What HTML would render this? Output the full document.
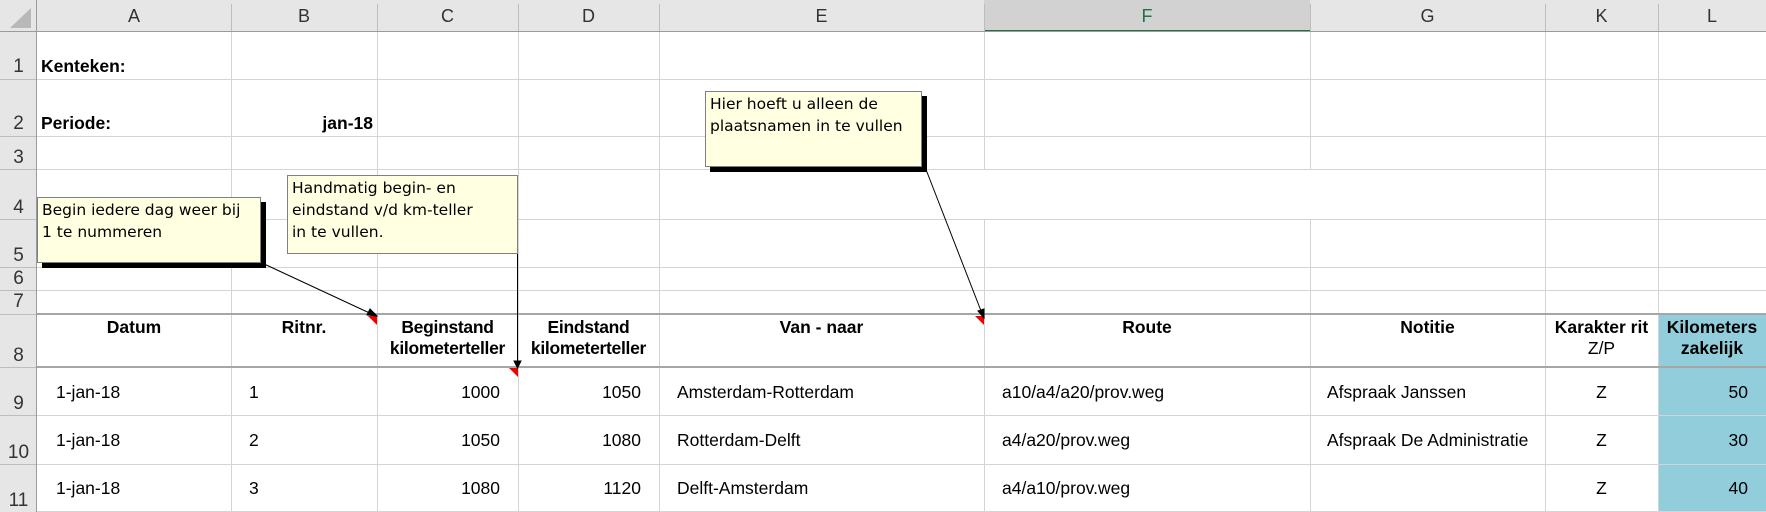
<!DOCTYPE html>
<html><head><meta charset="utf-8"><style>
*{margin:0;padding:0;box-sizing:border-box}
body{width:1766px;height:512px;overflow:hidden;background:#fff;position:relative;font-family:"Liberation Sans",Arial,sans-serif;color:#000}
.t{position:absolute;font-size:17.5px;line-height:21px;white-space:nowrap}
.b{font-weight:bold}
.ch{position:absolute;top:0;height:32px;line-height:32px;text-align:center;font-size:18px;color:#333}
.rh{position:absolute;left:0;width:37px;text-align:center;font-size:19px;color:#333;line-height:20px}
.cm{position:absolute;background:#ffffe1;border:1px solid #808080;font-family:"DejaVu Sans",sans-serif;font-size:15.5px;line-height:22px;padding:1px 4px;white-space:nowrap;overflow:visible}
.sh{box-shadow:5px 5px 0 #000}
</style></head><body>
<div style="position:absolute;left:0;top:0;width:1766px;height:32px;background:#e6e6e6"></div>
<div style="position:absolute;left:0;top:0;width:37px;height:512px;background:#e6e6e6"></div>
<div style="position:absolute;left:984px;top:0;width:326px;height:32px;background:#d2d2d2;border-bottom:2px solid #217346"></div>
<div style="position:absolute;left:1658px;top:314px;width:108px;height:198px;background:#92cddc"></div>
<svg width="1766" height="512" style="position:absolute;left:0;top:0">
<g stroke="#d4d4d4" stroke-width="1" shape-rendering="crispEdges">
<line x1="37" y1="79.5" x2="1766" y2="79.5"/>
<line x1="37" y1="136.5" x2="1766" y2="136.5"/>
<line x1="37" y1="169.5" x2="1766" y2="169.5"/>
<line x1="37" y1="219.5" x2="1766" y2="219.5"/>
<line x1="37" y1="267.5" x2="1766" y2="267.5"/>
<line x1="37" y1="290.5" x2="1766" y2="290.5"/>
<line x1="37" y1="415.5" x2="1766" y2="415.5"/>
<line x1="37" y1="464.5" x2="1766" y2="464.5"/>
<line x1="37" y1="511.5" x2="1766" y2="511.5"/>
<line x1="231.5" y1="32" x2="231.5" y2="512"/>
<line x1="377.5" y1="32" x2="377.5" y2="512"/>
<line x1="518.5" y1="32" x2="518.5" y2="512"/>
<line x1="659.5" y1="32" x2="659.5" y2="512"/>
<line x1="984.5" y1="32" x2="984.5" y2="169"/>
<line x1="984.5" y1="219" x2="984.5" y2="512"/>
<line x1="1310.5" y1="32" x2="1310.5" y2="169"/>
<line x1="1310.5" y1="219" x2="1310.5" y2="512"/>
<line x1="1545.5" y1="32" x2="1545.5" y2="512"/>
<line x1="1658.5" y1="32" x2="1658.5" y2="512"/>
</g>
<g stroke="#bdbdbd" stroke-width="1" shape-rendering="crispEdges">
<line x1="0" y1="79.5" x2="37" y2="79.5"/><line x1="0" y1="136.5" x2="37" y2="136.5"/>
<line x1="0" y1="169.5" x2="37" y2="169.5"/><line x1="0" y1="219.5" x2="37" y2="219.5"/>
<line x1="0" y1="267.5" x2="37" y2="267.5"/><line x1="0" y1="290.5" x2="37" y2="290.5"/>
<line x1="0" y1="314.5" x2="37" y2="314.5"/><line x1="0" y1="367.5" x2="37" y2="367.5"/>
<line x1="0" y1="415.5" x2="37" y2="415.5"/><line x1="0" y1="464.5" x2="37" y2="464.5"/>
<line x1="231.5" y1="4" x2="231.5" y2="32"/><line x1="377.5" y1="4" x2="377.5" y2="32"/>
<line x1="518.5" y1="4" x2="518.5" y2="32"/><line x1="659.5" y1="4" x2="659.5" y2="32"/>
<line x1="984.5" y1="4" x2="984.5" y2="32"/><line x1="1310.5" y1="4" x2="1310.5" y2="32"/>
<line x1="1545.5" y1="4" x2="1545.5" y2="32"/><line x1="1658.5" y1="4" x2="1658.5" y2="32"/>
</g>
<line x1="0" y1="31.5" x2="1766" y2="31.5" stroke="#9b9b9b" shape-rendering="crispEdges"/>
<line x1="36.5" y1="0" x2="36.5" y2="512" stroke="#9b9b9b" shape-rendering="crispEdges"/>
<line x1="37" y1="314" x2="1766" y2="314" stroke="#a6a6a6" stroke-width="2"/>
<line x1="37" y1="367" x2="1766" y2="367" stroke="#a6a6a6" stroke-width="2"/>
<polygon points="10,28 31,8 31,28" fill="#b8b8b8"/>
<polygon points="368,316 377,316 377,325" fill="#e00"/>
<polygon points="509,368 518,368 518,377" fill="#e00"/>
<polygon points="975,316 984,316 984,325" fill="#e00"/>
<g stroke="#000" stroke-width="1" fill="#000">
<line x1="262" y1="263" x2="376" y2="316"/>
<polygon points="377,316 370,309 367,315"/>
<line x1="517.5" y1="254" x2="517.5" y2="367"/>
<polygon points="517.5,368 514,361 521,361"/>
<line x1="925" y1="167" x2="983" y2="316"/>
<polygon points="984,318 978,311 984,309"/>
</g>
</svg>
<div class="ch" style="left:37px;width:194px">A</div>
<div class="ch" style="left:231px;width:146px">B</div>
<div class="ch" style="left:377px;width:141px">C</div>
<div class="ch" style="left:518px;width:141px">D</div>
<div class="ch" style="left:659px;width:325px">E</div>
<div class="ch" style="left:984px;width:326px;color:#217346">F</div>
<div class="ch" style="left:1310px;width:235px">G</div>
<div class="ch" style="left:1545px;width:113px">K</div>
<div class="ch" style="left:1658px;width:108px">L</div>
<div class="rh" style="top:57px">1</div>
<div class="rh" style="top:114px">2</div>
<div class="rh" style="top:148px">3</div>
<div class="rh" style="top:198px">4</div>
<div class="rh" style="top:246px">5</div>
<div class="rh" style="top:269px">6</div>
<div class="rh" style="top:292px">7</div>
<div class="rh" style="top:346px">8</div>
<div class="rh" style="top:394px">9</div>
<div class="rh" style="top:443px">10</div>
<div class="rh" style="top:491px">11</div>
<div class="t b" style="left:41px;top:56px">Kenteken:</div>
<div class="t b" style="left:41px;top:113px">Periode:</div>
<div class="t b" style="left:231px;width:142px;text-align:right;top:113px">jan-18</div>
<div class="t b" style="left:37px;width:194px;text-align:center;top:317px">Datum</div>
<div class="t b" style="left:231px;width:146px;text-align:center;top:317px">Ritnr.</div>
<div class="t b" style="left:377px;width:141px;text-align:center;top:317px;letter-spacing:-0.3px">Beginstand<br>kilometerteller</div>
<div class="t b" style="left:518px;width:141px;text-align:center;top:317px;letter-spacing:-0.3px">Eindstand<br>kilometerteller</div>
<div class="t b" style="left:659px;width:325px;text-align:center;top:317px">Van - naar</div>
<div class="t b" style="left:984px;width:326px;text-align:center;top:317px">Route</div>
<div class="t b" style="left:1310px;width:235px;text-align:center;top:317px">Notitie</div>
<div class="t" style="left:1545px;width:113px;text-align:center;top:317px"><b>Karakter rit</b><br>Z/P</div>
<div class="t b" style="left:1658px;width:108px;text-align:center;top:317px">Kilometers<br>zakelijk</div>
<div class="t" style="left:56px;top:382px">1-jan-18</div>
<div class="t" style="left:249px;top:382px">1</div>
<div class="t" style="left:377px;width:123px;text-align:right;top:382px">1000</div>
<div class="t" style="left:518px;width:123px;text-align:right;top:382px">1050</div>
<div class="t" style="left:677px;top:382px">Amsterdam-Rotterdam</div>
<div class="t" style="left:1002px;top:382px">a10/a4/a20/prov.weg</div>
<div class="t" style="left:1327px;top:382px">Afspraak Janssen</div>
<div class="t" style="left:1545px;width:113px;text-align:center;top:382px">Z</div>
<div class="t" style="left:1658px;width:90px;text-align:right;top:382px">50</div>
<div class="t" style="left:56px;top:430px">1-jan-18</div>
<div class="t" style="left:249px;top:430px">2</div>
<div class="t" style="left:377px;width:123px;text-align:right;top:430px">1050</div>
<div class="t" style="left:518px;width:123px;text-align:right;top:430px">1080</div>
<div class="t" style="left:677px;top:430px">Rotterdam-Delft</div>
<div class="t" style="left:1002px;top:430px">a4/a20/prov.weg</div>
<div class="t" style="left:1327px;top:430px">Afspraak De Administratie</div>
<div class="t" style="left:1545px;width:113px;text-align:center;top:430px">Z</div>
<div class="t" style="left:1658px;width:90px;text-align:right;top:430px">30</div>
<div class="t" style="left:56px;top:478px">1-jan-18</div>
<div class="t" style="left:249px;top:478px">3</div>
<div class="t" style="left:377px;width:123px;text-align:right;top:478px">1080</div>
<div class="t" style="left:518px;width:123px;text-align:right;top:478px">1120</div>
<div class="t" style="left:677px;top:478px">Delft-Amsterdam</div>
<div class="t" style="left:1002px;top:478px">a4/a10/prov.weg</div>
<div class="t" style="left:1545px;width:113px;text-align:center;top:478px">Z</div>
<div class="t" style="left:1658px;width:90px;text-align:right;top:478px">40</div>
<div class="cm sh" style="left:37px;top:197px;width:224px;height:66px">Begin iedere dag weer bij<br>1 te nummeren</div>
<div class="cm" style="left:287px;top:175px;width:231px;height:79px">Handmatig begin- en<br>eindstand v/d km-teller<br>in te vullen.</div>
<div class="cm sh" style="left:705px;top:91px;width:217px;height:76px">Hier hoeft u alleen de<br>plaatsnamen in te vullen</div>
</body></html>
